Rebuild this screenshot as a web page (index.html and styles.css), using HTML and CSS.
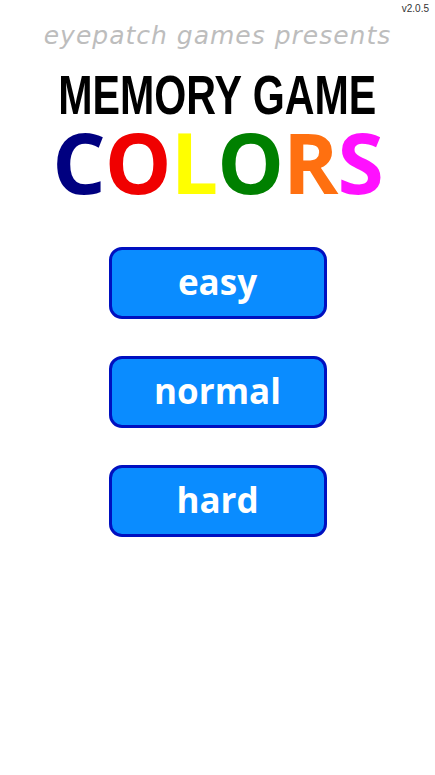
FILE: index.html
```html
<!DOCTYPE html>
<html lang="en">
<head>
    <meta charset="UTF-8">
    <meta name="viewport" content="width=device-width, initial-scale=1.0">
    <title>Memory Game Colors</title>
    <link rel="stylesheet" href="styles.css">
</head>
<body>
    <div class="version">v2.0.5</div>

    <div class="presents">eyepatch games presents</div>

    <div class="title">
        <h1 class="memory"><span>MEMORY GAME</span></h1>
        <h2 class="colors">
            <span class="c1">C</span><span class="c2">O</span><span class="c3">L</span><span class="c4">O</span><span class="c5">R</span><span class="c6">S</span>
        </h2>
    </div>

    <div class="menu">
        <button class="level">easy</button>
        <button class="level">normal</button>
        <button class="level">hard</button>
    </div>
</body>
</html>
```

FILE: styles.css
```css
/* start screen of the colors memory game */
body {
    margin: 0;
    background-color: #fff;
    font-family: "Open Sans", Arial, sans-serif;
    position: relative;
}
.version {
    position: absolute;
    top: 3px;
    right: 6px;
    font-family: "Liberation Sans", Arial, sans-serif;
    font-size: 10px;
    color: #333;
}
.presents {
    padding-top: 17px;
    text-align: center;
    font-family: "DejaVu Sans", sans-serif;
    font-style: italic;
    font-weight: 300;
    font-size: 25px;
    letter-spacing: 1px;
    color: #bdbdbd;
    line-height: 38px;
}
.title {
    text-align: center;
    margin-top: 12px;
}
.memory {
    margin: 0;
    font-family: "Liberation Sans", Arial, sans-serif;
    font-weight: bold;
    font-size: 56px;
    line-height: 56px;
    color: #000;
}
.memory span {
    display: inline-block;
    transform: scaleX(0.735);
    margin: 0 -60px;
}
.colors {
    margin: 0;
    font-family: "Open Sans", sans-serif;
    font-weight: bold;
    font-size: 84px;
    line-height: 78px;
    letter-spacing: -1px;
}
.colors span {
    display: inline-block;
}
.c1 { color: #000080; }
.c2 { color: #f00000; }
.c3 { color: #ffff00; }
.c4 { color: #008000; }
.c5 { color: #ff7010; }
.c6 { color: #ff10ff; }
.menu {
    display: flex;
    flex-direction: column;
    align-items: center;
    gap: 37px;
    margin-top: 46px;
}
.level {
    width: 218px;
    height: 72px;
    background-color: #0a8cff;
    border: 3px solid #0010c0;
    border-radius: 13px;
    color: #fff;
    font-family: "Open Sans", sans-serif;
    font-weight: bold;
    font-size: 35px;
    padding: 0 0 4px 0;
    cursor: pointer;
}
```
